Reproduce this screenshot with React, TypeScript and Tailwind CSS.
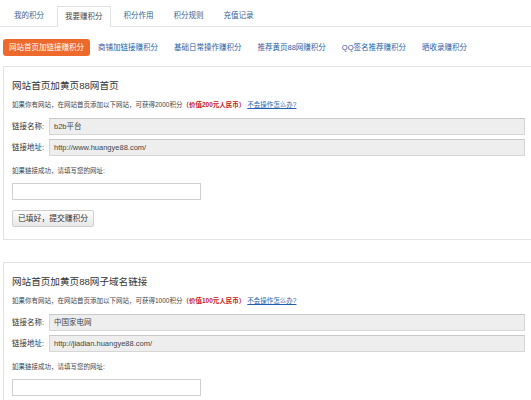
import React from "react";

const font = { fontFamily: '"Liberation Sans", "Noto Sans CJK SC", sans-serif' };

function Tabs() {
  const tabs = ["我的积分", "我要赚积分", "积分作用", "积分规则", "充值记录"];
  return (
    <div className="flex items-end h-[27px] border-b border-[#e3e3e3] pl-[7px] gap-[6px]">
      {tabs.map((t, i) =>
        i === 1 ? (
          <div
            key={t}
            className="h-[21px] -mb-px px-[7px] flex items-center bg-white border border-[#e0e0e0] border-b-white text-[7.5px] text-[#444]"
          >
            {t}
          </div>
        ) : (
          <div key={t} className="h-[21px] px-[7px] flex items-center text-[7.5px] text-[#3a5f8f]">
            {t}
          </div>
        )
      )}
    </div>
  );
}

function SubNav() {
  const items = ["商铺加链接赚积分", "基础日常操作赚积分", "推荐黄页88网赚积分", "QQ签名推荐赚积分", "晒收录赚积分"];
  return (
    <div className="flex items-center mt-[12px] pl-[3px] gap-[2px]">
      <div className="h-[17px] px-[6px] flex items-center rounded-[3px] bg-[#ee6a2c] text-white text-[7.5px]">
        网站首页加链接赚积分
      </div>
      {items.map((t) => (
        <div key={t} className="h-[17px] px-[6px] flex items-center text-[7.5px] text-[#2a5ea6] mr-[2px]">
          {t}
        </div>
      ))}
    </div>
  );
}

function Row({ label, value }: { label: string; value: string }) {
  return (
    <div className="flex items-center">
      <div className="w-[37px] text-[7.5px] text-[#333]">{label}</div>
      <div className="flex-1 h-[17px] mr-[6px] bg-[#eeeeee] border border-[#d6d6d6] border-t-[#c8c8c8] flex items-center pl-[4px] text-[7.5px] text-[#444]">
        {value}
      </div>
    </div>
  );
}

function Panel({
  title,
  points,
  worth,
  name,
  url,
  mt,
}: {
  title: string;
  points: string;
  worth: string;
  name: string;
  url: string;
  mt: string;
}) {
  return (
    <div className={`${mt} ml-[3px] border border-r-0 border-[#e3e3e3] bg-white pl-[8px] pt-[12px] pb-[11px]`}>
      <div className="h-[14px] leading-[14px] text-[9.6px] text-[#333]">{title}</div>
      <div className="mt-[7px] h-[10px] leading-[10px] text-[6.5px] text-[#444] whitespace-nowrap">
        如果你有网站，在网站首页添加以下网站，可获得{points}积分
        <span className="font-bold text-[#c3171d]">（价值{worth}元人民币）</span>
        <span className="ml-[2px] text-[#1f5fae] underline">不会操作怎么办?</span>
      </div>
      <div className="mt-[8px]">
        <Row label="链接名称:" value={name} />
      </div>
      <div className="mt-[4px]">
        <Row label="链接地址:" value={url} />
      </div>
      <div className="mt-[10px] h-[10px] leading-[10px] text-[6.5px] text-[#444]">如果链接成功，请填写您的网址:</div>
      <div className="mt-[7px] w-[189px] h-[17px] bg-white border border-[#d0d0d0]" />
      <div className="mt-[10px] inline-flex h-[17px] px-[5px] items-center rounded-[2px] border border-[#cfcfcf] bg-gradient-to-b from-[#fdfdfd] to-[#e8e8e8] text-[7.8px] text-[#333]">
        已填好，提交赚积分
      </div>
    </div>
  );
}

export default function App() {
  return (
    <div className="w-[531px] h-[400px] overflow-hidden bg-white" style={font}>
      <Tabs />
      <SubNav />
      <Panel
        mt="mt-[10px]"
        title="网站首页加黄页88网首页"
        points="2000"
        worth="200"
        name="b2b平台"
        url="http://www.huangye88.com/"
      />
      <Panel
        mt="mt-[22px]"
        title="网站首页加黄页88网子域名链接"
        points="1000"
        worth="100"
        name="中国家电网"
        url="http://jiadian.huangye88.com/"
      />
    </div>
  );
}
